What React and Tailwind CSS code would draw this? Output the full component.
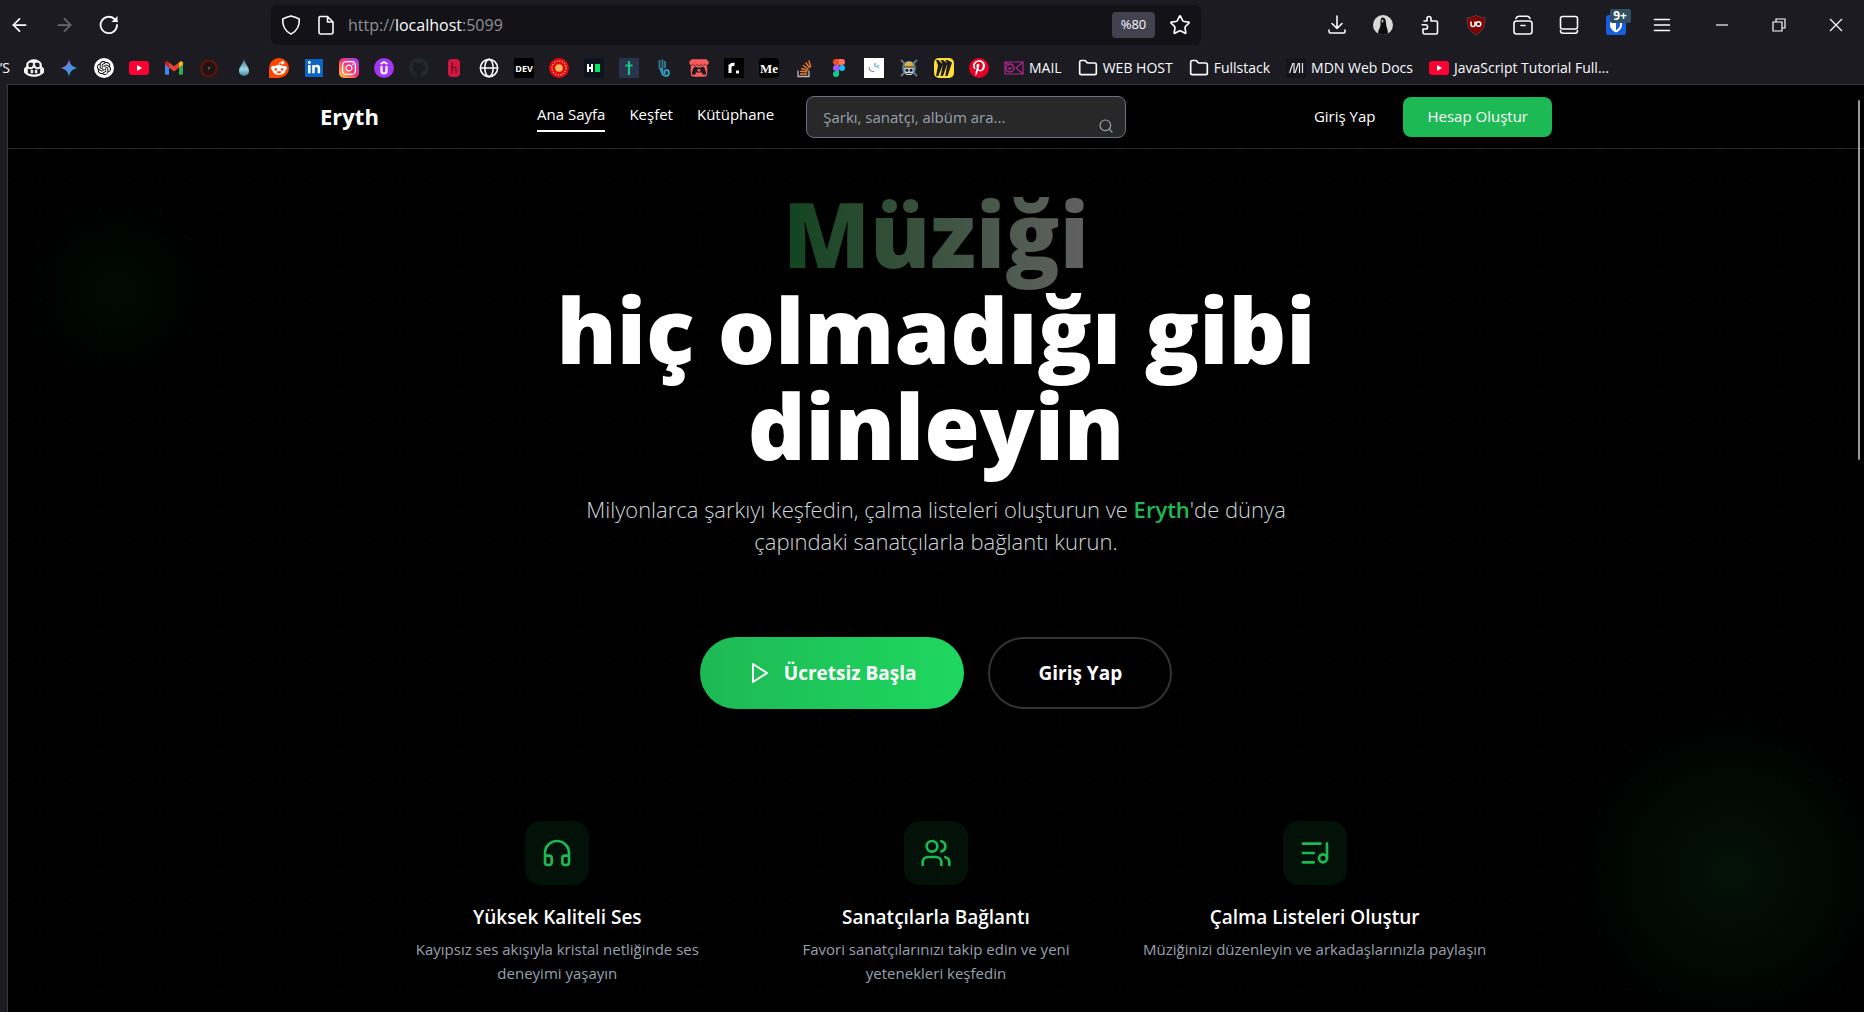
import React from "react";
import { Headphones, Users, ListMusic, Search, ArrowLeft, ArrowRight, Star, Folder } from "lucide-react";
import { FaRedditAlien, FaPinterestP, FaLinkedinIn, FaInstagram, FaGithub, FaItchIo } from "react-icons/fa6";
import { SiOpenai, SiGithubcopilot, SiMiro } from "react-icons/si";

const line = {
  fill: "none",
  stroke: "currentColor",
  strokeWidth: 1.6,
  strokeLinecap: "round",
  strokeLinejoin: "round",
};

function Svg({ children, className = "" }) {
  return (
    <svg viewBox="0 0 20 20" aria-hidden="true" className={`h-5 w-5 shrink-0 ${className}`}>
      {children}
    </svg>
  );
}

function Tile({ className, children }) {
  return <span className={`flex h-5 w-5 shrink-0 items-center justify-center overflow-hidden ${className}`}>{children}</span>;
}

const YouTubeIcon = () => (
  <Svg>
    <rect x="0" y="3" width="20" height="14" rx="3" fill="#ff0033" />
    <path d="M8 7l5.2 3L8 13z" fill="#fff" />
  </Svg>
);

const bookmarks = [
  ["Copilot", <SiGithubcopilot className="h-5 w-5 stroke-white stroke-1 text-white" />],
  [
    "Gemini",
    <Svg>
      <defs>
        <linearGradient id="gem" x1="0" y1="0" x2="1" y2="1">
          <stop offset="0.2" stopColor="#9b72cb" />
          <stop offset="0.5" stopColor="#4a8fe0" />
          <stop offset="0.9" stopColor="#2aa7e8" />
        </linearGradient>
      </defs>
      <path d="M10 1c.6 5.400 3.600 8.400 9 9-5.400.6-8.400 3.600-9 9-.6-5.400-3.600-8.400-9-9 5.400-.6 8.400-3.600 9-9z" fill="url(#gem)" />
    </Svg>,
  ],
  ["ChatGPT", <Tile className="rounded-full bg-white"><SiOpenai className="h-3.5 w-3.5 text-black" /></Tile>],
  ["YouTube", <YouTubeIcon />],
  [
    "Gmail",
    <Svg>
      <path d="M1 5v10.500c0 .8.500 1.300 1.300 1.300H5V8z" fill="#4285f4" />
      <path d="M19 5v10.500c0 .8-.5 1.300-1.300 1.300H15V8z" fill="#34a853" />
      <path d="M15 4.500L16 3.700c1.200-.9 3-.1 3 1.500v1.300L15 9.600z" fill="#fbbc04" />
      <path d="M5 4.500v5.100L10 13.400l5-3.800V4.500L10 8.300z" fill="#ea4335" />
      <path d="M1 5.200c0-1.600 1.800-2.400 3-1.500l1 .8v5.100L1 6.500z" fill="#c5221f" />
    </Svg>,
  ],
  [
    "Dark ring",
    <Svg>
      <circle cx="10" cy="10.500" r="7.800" fill="#1d1216" stroke="#55140d" strokeWidth="2.600" />
      <path d="M5 4l1-3 2 2M15 4l-1-3-2 2" fill="#55140d" />
      <path d="M8.500 8.500l1.500 4 1.500-4-1.500 1z" fill="#8a6a1c" />
    </Svg>,
  ],
  [
    "Drop",
    <Svg>
      <defs>
        <linearGradient id="drop" x1="0" y1="0" x2="0" y2="1">
          <stop offset="0" stopColor="#2f6f86" />
          <stop offset="0.6" stopColor="#9fd6e6" />
          <stop offset="1" stopColor="#3c86a0" />
        </linearGradient>
      </defs>
      <path d="M10 1c1 4.500 5 8 5 12a5 5 0 0 1-10 0c0-4 4-7.500 5-12z" fill="url(#drop)" />
    </Svg>,
  ],
  ["Reddit", <Tile className="rounded-full rounded-bl-md bg-[#ff4500]"><FaRedditAlien className="h-4 w-4 text-white" /></Tile>],
  ["LinkedIn", <Tile className="px-px"><span className="flex h-[18px] w-[18px] items-center justify-center bg-[#0a66c2]"><FaLinkedinIn className="h-3.5 w-3.5 text-white" /></span></Tile>],
  ["Instagram", <Tile className="rounded-[5px] bg-linear-to-tr from-[#ffc400] via-[#ff2a6d] to-[#a01cff]"><FaInstagram className="h-4 w-4 text-white" /></Tile>],
  [
    "Udemy",
    <Svg>
      <circle cx="10" cy="10" r="10" fill="#a435f0" />
      <path d="M6.500 6L10 4l3.500 2" fill="none" stroke="#fff" strokeWidth="1.800" />
      <path d="M7.500 8v5a2.500 2.500 0 0 0 5 0V8" fill="none" stroke="#fff" strokeWidth="2.200" />
    </Svg>,
  ],
  ["GitHub", <FaGithub className="h-5 w-5 text-[#24292f]" />],
  [
    "Red badge",
    <Svg>
      <rect x="4" y="1" width="12" height="18" rx="4" fill="#d3163f" />
      <path d="M8 4v11M8 10.500c1.500-2 4-1.500 4 1V15" fill="none" stroke="#7c1029" strokeWidth="1.600" />
    </Svg>,
  ],
  [
    "Web",
    <Svg>
      <circle cx="10" cy="10" r="8.600" {...line} />
      <ellipse cx="10" cy="10" rx="4.200" ry="8.600" {...line} />
      <path d="M1.500 10h17" {...line} />
    </Svg>,
  ],
  ["DEV", <Tile className="rounded-xs bg-black"><span className="text-[9px] leading-none font-bold text-white">DEV</span></Tile>],
  [
    "Seal",
    <Svg>
      <circle cx="10" cy="10" r="10" fill="#e30613" />
      <circle cx="10" cy="10" r="7" fill="none" stroke="#ffc84a" strokeWidth="1.400" strokeDasharray="1.200 1.550" />
      <circle cx="10" cy="10" r="3.800" fill="#f0b95a" />
    </Svg>,
  ],
  [
    "HackerRank",
    <Svg>
      <rect width="20" height="20" fill="#0e141e" />
      <path d="M4 6v8M8 6v8M4 10h4" stroke="#fff" strokeWidth="2" fill="none" />
      <rect x="11" y="6" width="5" height="8" fill="#00ea64" />
    </Svg>,
  ],
  [
    "Dagger",
    <Svg>
      <rect width="20" height="20" fill="#29334b" />
      <path d="M10 3v14M6.500 7.500h7" stroke="#19c37d" strokeWidth="2.200" fill="none" />
    </Svg>,
  ],
  [
    "Teal mark",
    <Svg>
      <path d="M5.500 2v8l3 3V1.500M11 3v7" stroke="#2f7f95" strokeWidth="1.800" fill="none" />
      <path d="M7 10c0 4 1.500 8 5 8 3.500 0 4-6 .5-6-2.500 0-3 3.500-.8 3.600" stroke="#2f9fbb" strokeWidth="2" fill="none" />
    </Svg>,
  ],
  ["itch.io", <FaItchIo className="h-5 w-5 text-[#fa5c5c]" />],
  [
    "roadmap",
    <Svg>
      <rect width="20" height="20" fill="#000" />
      <path d="M6 15V6.500M6 9c.5-2 2-3 4.500-2.500" stroke="#fff" strokeWidth="3" fill="none" />
      <rect x="12" y="12.500" width="3" height="3" fill="#fff" />
    </Svg>,
  ],
  ["Medium", <Tile className="rounded-sm bg-black"><span className="font-['Liberation_Serif',serif] text-[13px] leading-none font-bold text-white">Me</span></Tile>],
  [
    "Stack Overflow",
    <Svg>
      <path d="M4 12.500v6h11v-6" fill="none" stroke="#bcbbbb" strokeWidth="1.300" />
      <path d="M6 16h7M6.200 13.200l7 .7M7.200 10.300l6.500 2.200M9 7.300l5.600 3.900M11.600 4.500l4.200 5.400M14.800 2.500l2 6.600" fill="none" stroke="#f48024" strokeWidth="1.400" />
    </Svg>,
  ],
  [
    "Figma",
    <Svg>
      <path d="M10 1H7a3 3 0 0 0 0 6h3z" fill="#f24e1e" />
      <path d="M10 1h3a3 3 0 0 1 0 6h-3z" fill="#ff7262" />
      <path d="M10 7H7a3 3 0 0 0 0 6h3z" fill="#a259ff" />
      <circle cx="13" cy="10" r="3" fill="#1abcfe" />
      <path d="M10 13H7a3 3 0 1 0 3 3z" fill="#0acf83" />
    </Svg>,
  ],
  [
    "White card",
    <Svg>
      <rect width="20" height="20" fill="#fff" />
      <path d="M5 9c0 3 2 5 5.500 4.500M11 5v4" fill="none" stroke="#7f92c8" strokeWidth="1.200" />
      <path d="M15 7l-2.500 1.500L15 10" fill="none" stroke="#6cc5d6" strokeWidth="1.200" />
    </Svg>,
  ],
  [
    "Straw hat",
    <Svg>
      <path d="M2 2l16 16M18 2L2 18" stroke="#77777c" strokeWidth="1.800" />
      <circle cx="10" cy="10" r="7" fill="#3c86b8" />
      <path d="M5.500 8a4.500 4.500 0 0 1 9 0z" fill="#e0b23c" />
      <rect x="3.500" y="7.800" width="13" height="1.800" fill="#8a6a30" />
      <path d="M5.500 10h9v4l-2 3h-5l-2-3z" fill="#cfcfcf" />
      <circle cx="7.900" cy="12.200" r="1.500" fill="#16161a" />
      <circle cx="12.100" cy="12.200" r="1.500" fill="#16161a" />
      <path d="M7.500 15.500h5" stroke="#16161a" strokeWidth=".8" />
    </Svg>,
  ],
  ["Miro", <Tile className="rounded-[5px] bg-[#ffdd33]"><SiMiro className="h-4 w-4 text-[#1c1c1e]" /></Tile>],
  ["Pinterest", <Tile className="rounded-full bg-[#e60023]"><FaPinterestP className="h-4 w-4 text-white" /></Tile>],
];

const MailIcon = () => (
  <Svg className="text-[#b0278a]">
    <rect x="1" y="4" width="18" height="12" {...line} strokeWidth="1.200" />
    <path d="M19 4l-7 6 7 6M1 4l4 3" {...line} strokeWidth="1.200" />
    <circle cx="6" cy="10" r="4" {...line} strokeWidth="1.400" />
    <path d="M4.500 10l1.300 1.500L8 8.500" {...line} strokeWidth="1.200" />
  </Svg>
);

const FolderIcon = () => <Folder className="h-5 w-5 shrink-0 text-[#fbfbfe]" strokeWidth={2} />;

const MdnIcon = () => (
  <Svg>
    <rect width="20" height="20" fill="#15141a" />
    <path d="M3.500 15L7 5M8 5v10M9 15l3.500-10M13.500 5v10M16.500 5v10" stroke="#e8e8ec" strokeWidth="1.200" fill="none" />
  </Svg>
);

const namedBookmarks = [
  ["MAIL", <MailIcon />],
  ["WEB HOST", <FolderIcon />],
  ["Fullstack", <FolderIcon />],
  ["MDN Web Docs", <MdnIcon />],
  ["JavaScript Tutorial Full...", <YouTubeIcon />],
];

const toolbarIcons = [
  ["Downloads", <Svg><path d="M10 1v12M5 8.500l5 5 5-5M2 15v1.500A1.500 1.500 0 0 0 3.500 18h13a1.500 1.500 0 0 0 1.500-1.500V15" {...line} /></Svg>],
  [
    "Profile",
    <Svg>
      <circle cx="10" cy="10" r="10" fill="#d9d9d9" />
      <path d="M9.500 2.500c3 0 3.500 3.500 3.500 6 0 3 2 6 2 10A10 10 0 0 1 5 18.600c0-4 3-6 2.500-10 0-3 .2-6 2-6.100z" fill="#0c0c0d" />
      <path d="M9.300 4.500c1.400 0 1.400 3.200.2 3.200s-1.300-3.200-.2-3.200z" fill="#bdbdbd" />
    </Svg>,
  ],
  ["Extensions", <Svg><path d="M7 6V3.500a2 2 0 0 1 4 0V6h5a1.500 1.500 0 0 1 1.500 1.500v10A1.500 1.500 0 0 1 16 19H4.500A1.500 1.500 0 0 1 3 17.500V14h2.500a2 2 0 0 0 0-4.200H2.200M4 6h3" {...line} /></Svg>],
  [
    "uBlock Origin",
    <Svg>
      <path d="M10 .3c3 1.700 5.500 2.300 9 2.500 0 8-1.500 13-9 17-7.500-4-9-9-9-17 3.500-.2 6-.8 9-2.500z" fill="#800000" stroke="#5c5c60" strokeWidth=".6" />
      <path d="M5 6.500v3a2 2 0 0 0 4 0v-3" fill="none" stroke="#fff" strokeWidth="1.500" />
      <circle cx="12.500" cy="9" r="2.300" fill="none" stroke="#fff" strokeWidth="1.500" />
    </Svg>,
  ],
  ["Archive", <Svg><rect x="1" y="6" width="18" height="13" rx="2.500" {...line} /><path d="M3 3.500C3.500 2 4.500 1.200 6 1.200h8c1.500 0 2.500.8 3 2.300M8 10.500h4" {...line} /></Svg>],
  ["Sidebar", <Svg><rect x="1.500" y="1.500" width="17" height="12.500" rx="2" {...line} /><path d="M1.500 15.500c0 2 1 2.700 2.500 2.700h12c1.500 0 2.500-.7 2.500-2.700" {...line} /></Svg>],
  [
    "Bitwarden",
    <span className="relative">
      <Svg>
        <rect width="20" height="20" rx="2.500" fill="#175ddc" />
        <path d="M4 3h12v7c0 3.500-3 6-6 7.500C7 16 4 13.500 4 10z" fill="#fff" />
        <path d="M10 5v10.200c2-1.200 4-3 4-5.200V5z" fill="#175ddc" />
      </Svg>
      <span className="absolute -top-1.5 left-1 flex h-3.5 w-[21px] items-center justify-center rounded-xs bg-[#2e5061] text-[12px] leading-none font-bold text-white">9+</span>
    </span>,
  ],
  ["Menu", <Svg><path d="M2.500 4.500h15M2.500 10h15M2.500 15.500h15" {...line} /></Svg>],
];

const windowIcons = [
  ["Minimize", <Svg><path d="M4 10h12" stroke="currentColor" strokeWidth="1.200" /></Svg>],
  ["Restore", <Svg><path d="M4 7h9v9H4zM7 7V4h9v9h-3" fill="none" stroke="currentColor" strokeWidth="1.200" /></Svg>],
  ["Close", <Svg><path d="M4 4l12 12M16 4L4 16" stroke="currentColor" strokeWidth="1.200" /></Svg>],
];

function BrowserChrome() {
  return (
    <div className="bg-[#1c1b22] text-[#fbfbfe]">
      <div className="flex h-[50px] items-center">
        <div className="flex w-[271px] shrink-0 items-center gap-6 pl-[9px]">
          <button aria-label="Back" className="flex w-[21px] justify-center"><ArrowLeft className="h-[22px] w-[22px]" strokeWidth={2} /></button>
          <button aria-label="Forward" className="flex w-[21px] justify-center text-[#6b6a72]"><ArrowRight className="h-[22px] w-[22px]" strokeWidth={2} /></button>
          <button aria-label="Reload">
            <Svg><path d="M18 10a8.200 8.200 0 1 1-2.600-6L18 6.300" {...line} strokeWidth="1.800" /><path d="M18.500 1v6h-6z" fill="currentColor" /></Svg>
          </button>
        </div>
        <div className="flex h-10 flex-1 items-center rounded-md bg-[#131217] pr-2.5 pl-2.5">
          <Svg><path d="M10 .9c3 .8 5.500 1.700 8.300 3 .3 6.500-1.500 11.800-8.300 15.200C3.200 15.700 1.400 10.400 1.700 3.900 4.500 2.600 7 1.700 10 .9z" {...line} /></Svg>
          <Svg className="ml-[15px]"><path d="M4 1.500h7.500L17 7v10a2 2 0 0 1-2 2H5a2 2 0 0 1-2-2V3a1.500 1.500 0 0 1 1-1.500zM11.500 1.500V7H17" {...line} /></Svg>
          <div role="textbox" aria-label="Address" className="ml-3 flex-1 text-base text-[#8f8f98]">
            http://<span className="text-[#fbfbfe]">localhost</span>:5099
          </div>
          <button className="h-[26px] w-[43px] rounded-sm bg-[#42414d] text-[13px]">%80</button>
          <button aria-label="Bookmark this page" className="ml-3.5"><Star className="h-[22px] w-[22px]" strokeWidth={1.8} /></button>
        </div>
        <div className="flex w-[663px] shrink-0 items-center pl-[126px]">
          <div className="flex flex-1 items-center justify-between">
            {toolbarIcons.map(([label, icon]) => (
              <button key={label} aria-label={label} className="flex">{icon}</button>
            ))}
          </div>
          <div className="ml-10 flex gap-[37px] pr-[18px]">
            {windowIcons.map(([label, icon]) => (
              <button key={label} aria-label={label} className="flex">{icon}</button>
            ))}
          </div>
        </div>
      </div>
      <nav aria-label="Bookmarks" className="flex h-[34px] items-start overflow-hidden pt-2 text-sm leading-5 whitespace-nowrap">
        <span className="w-6 shrink-0">’S</span>
        <div className="flex gap-[15px]">
          {bookmarks.map(([label, icon]) => (
            <a key={label} href="#" aria-label={label} className="flex">{icon}</a>
          ))}
        </div>
        <div className="ml-[15px] flex gap-4">
          {namedBookmarks.map(([label, icon]) => (
            <a key={label} href="#" className="flex items-center gap-[5px]">
              {icon}
              {label}
            </a>
          ))}
        </div>
      </nav>
    </div>
  );
}

function SiteHeader() {
  return (
    <header className="border-b border-[#282828] bg-black">
      <div className="mx-auto flex h-[63px] max-w-7xl items-center px-6">
        <a href="#" className="w-[217px] text-[22px] font-bold">Eryth</a>
        <nav aria-label="Site" className="flex gap-6 text-[15px] leading-6">
          <a href="#" className="border-b-2 border-white pb-1">Ana Sayfa</a>
          <a href="#" className="pb-1">Keşfet</a>
          <a href="#" className="pb-1">Kütüphane</a>
        </nav>
        <div className="relative ml-8">
          <input
            type="search"
            aria-label="Ara"
            placeholder="Şarkı, sanatçı, albüm ara..."
            className="h-[42px] w-80 rounded-lg border border-gray-500 bg-[#282828] pr-10 pl-4 text-[15px] placeholder:text-gray-400"
          />
          <Search className="absolute right-3 bottom-1 h-4 w-4 text-gray-400" strokeWidth={1.8} />
        </div>
        <div className="ml-auto flex items-center gap-7 text-[15px]">
          <a href="#">Giriş Yap</a>
          <a href="#" className="flex h-10 items-center rounded-lg bg-[#1db954] px-6">Hesap Oluştur</a>
        </div>
      </div>
    </header>
  );
}

const features = [
  [Headphones, "Yüksek Kaliteli Ses", "Kayıpsız ses akışıyla kristal netliğinde ses deneyimi yaşayın"],
  [Users, "Sanatçılarla Bağlantı", "Favori sanatçılarınızı takip edin ve yeni yetenekleri keşfedin"],
  [ListMusic, "Çalma Listeleri Oluştur", "Müziğinizi düzenleyin ve arkadaşlarınızla paylaşın"],
];

function Hero() {
  return (
    <main className="relative flex-1 overflow-hidden bg-[radial-gradient(circle_at_2px_2px,#020c06_1px,transparent_1px)] bg-size-[30px_30px] bg-position-[0px_29px]">
      <div className="absolute top-[41px] left-2 h-50 w-50 rounded-full bg-[radial-gradient(circle,#010a04,transparent_70%)]" />
      <div className="absolute right-[-67px] bottom-[-60px] h-100 w-100 rounded-full bg-[radial-gradient(circle,#031207,#020b05_24%,transparent_58%)]" />
      <div className="relative mx-auto flex max-w-6xl flex-col items-center px-6 pt-9 text-center">
        <h1 className="max-w-4xl text-[90px] leading-[96px] font-extrabold">
          <span className="mx-auto -mb-3 block w-fit bg-linear-to-r from-[#0f4420] to-[#616161] bg-clip-text pb-3 text-transparent">Müziği</span>
          hiç olmadığı gibi
          <br />
          dinleyin
        </h1>
        <p className="mt-5 max-w-3xl text-[22px] leading-8 font-light text-gray-300">
          Milyonlarca şarkıyı keşfedin, çalma listeleri oluşturun ve <span className="font-semibold text-[#1db954]">Eryth</span>'de dünya çapındaki sanatçılarla bağlantı kurun.
        </p>
        <div className="mt-20 flex gap-6 text-[19px] font-bold">
          <a href="#" className="flex h-18 items-center gap-3 rounded-full bg-linear-to-r from-[#1db954] to-[#1ed760] px-12">
            <svg viewBox="0 0 24 24" aria-hidden="true" className="h-6 w-6 fill-none stroke-current stroke-2">
              <path d="M5 3l14 9-14 9z" strokeLinejoin="round" />
            </svg>
            Ücretsiz Başla
          </a>
          <a href="#" className="flex h-18 items-center rounded-full border-2 border-[#333333] px-12">Giriş Yap</a>
        </div>
        <div className="mt-28 grid w-full grid-cols-3 gap-8">
          {features.map(([Icon, title, text]) => (
            <section key={title} className="flex flex-col items-center">
              <div className="flex h-16 w-16 items-center justify-center rounded-2xl bg-[#021208]">
                <Icon className="h-8 w-8 text-[#1db954]" strokeWidth={2} />
              </div>
              <h2 className="mt-4 text-[19px] leading-8 font-semibold">{title}</h2>
              <p className="mt-1 text-[15px] leading-6 text-gray-400">{text}</p>
            </section>
          ))}
        </div>
      </div>
    </main>
  );
}

export default function App() {
  return (
    <div className="flex min-h-screen flex-col overflow-hidden bg-[#1c1b22] font-['Open_Sans','Noto_Sans',sans-serif] text-white">
      <BrowserChrome />
      <div className="relative ml-[7px] flex flex-1 flex-col border-t border-l border-[#38373f] bg-black">
        <SiteHeader />
        <Hero />
        <div className="absolute top-[15px] right-1 h-90 w-0.5 rounded-full bg-[#9a9a9e]" />
      </div>
    </div>
  );
}
